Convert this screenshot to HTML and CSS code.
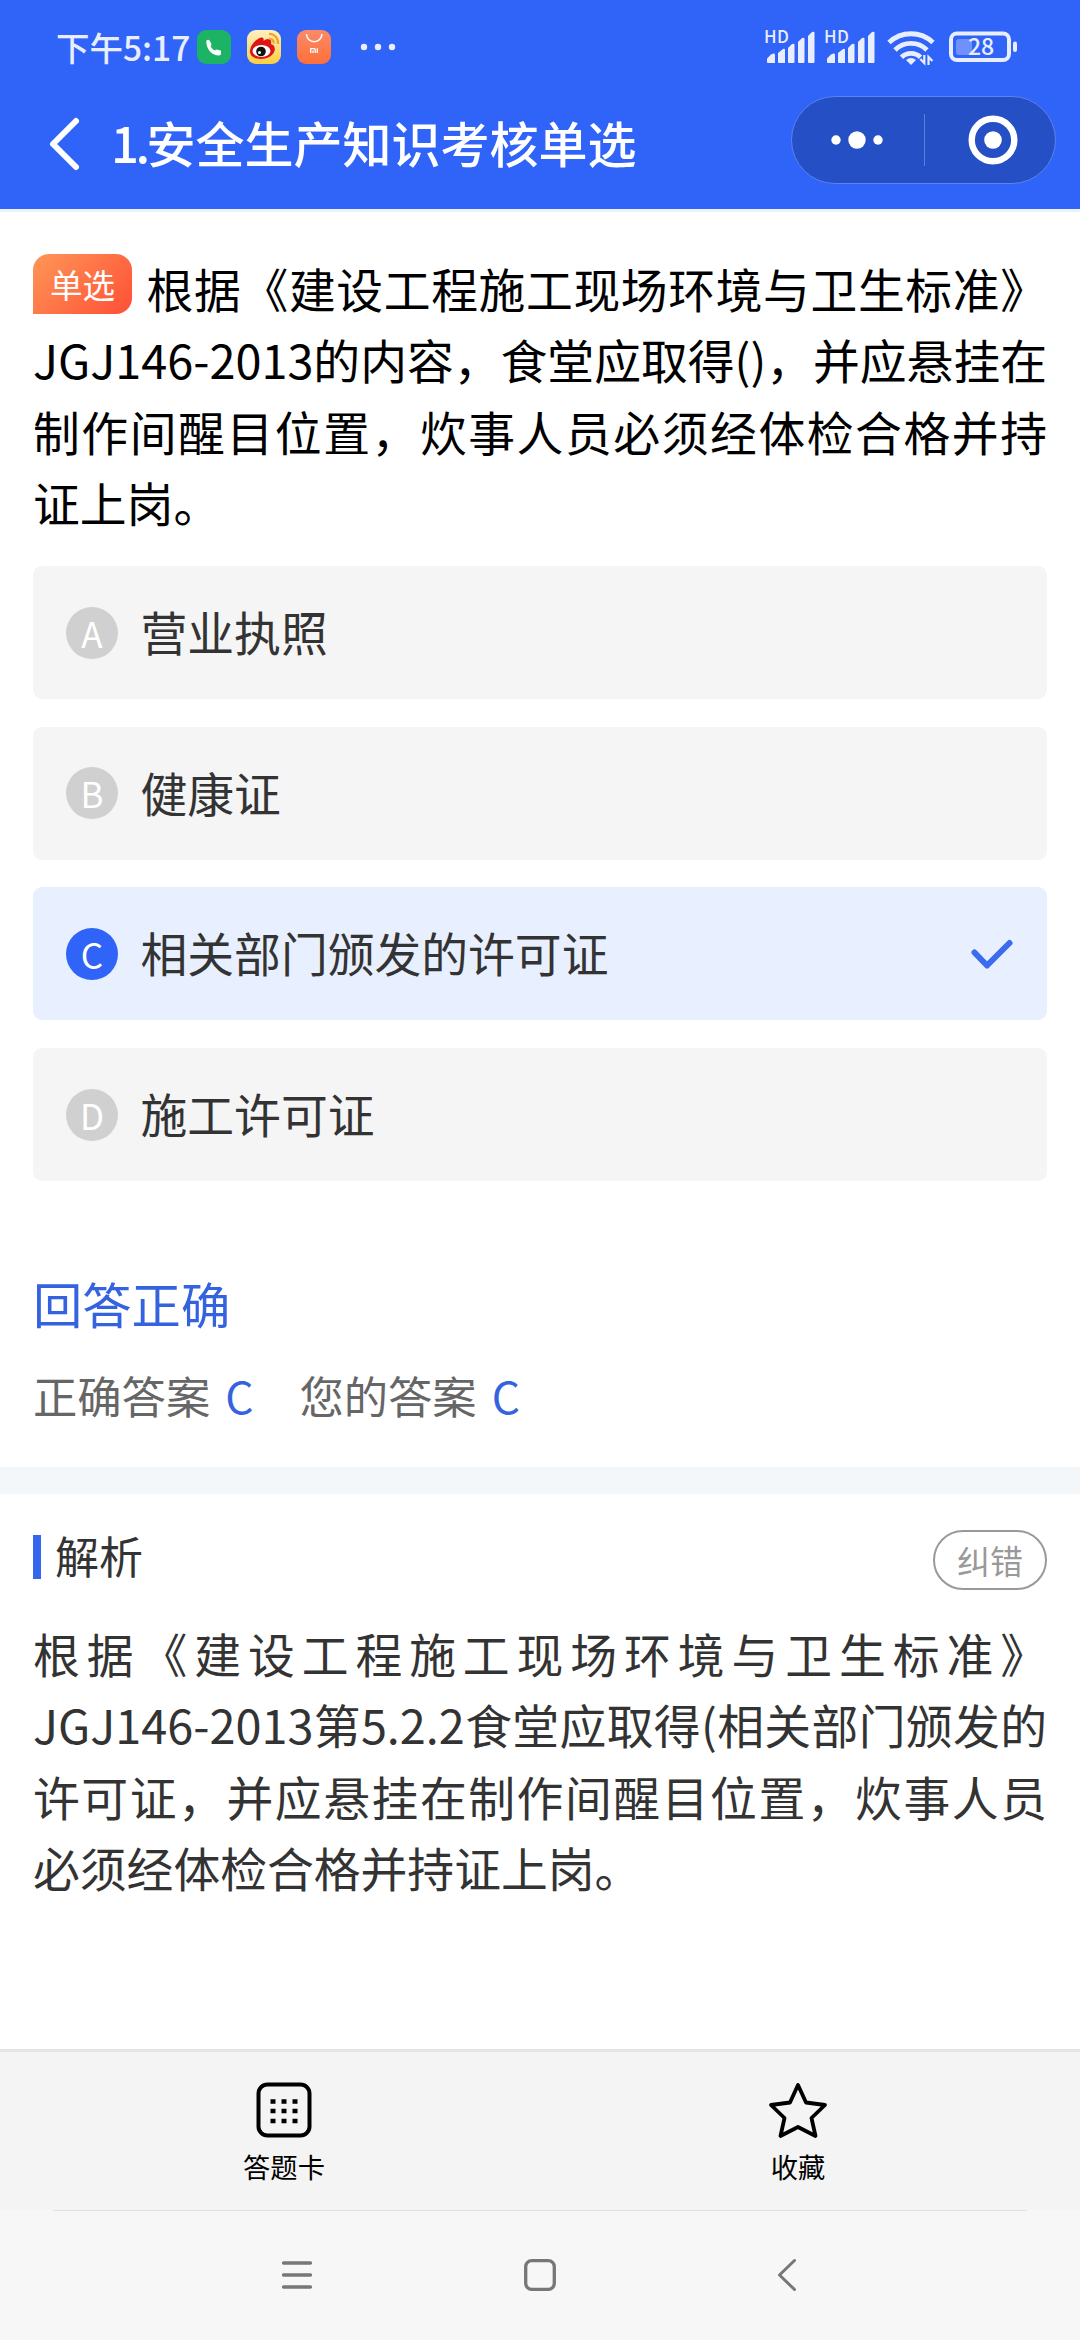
FILE: index.html
```html
<!DOCTYPE html>
<html lang="zh-CN">
<head>
<meta charset="utf-8">
<title>安全生产知识考核</title>
<link rel="stylesheet" href="styles.css">
</head>
<body>
<div class="screen">
  <header class="header">
    <div class="status">
      <div class="status-left">
        <span class="time">下午5:17</span>
        <svg class="app" viewBox="0 0 34 34"><rect width="34" height="34" rx="9" fill="#1cb464"/><path d="M9.500 10.500c.8-1 2.400-1 3.100 0l1.800 3.400c.3.900-.1 1.500-.9 2.200 1 2.200 2.400 3.500 4.500 4.400.8-.8 1.500-1.200 2.300-.8l3.700.8V24c-.3 1-1.500 1.500-2.800 1.500C14 25.500 8.300 17 9.500 10.500z" fill="#fff"/></svg>
        <svg class="app" viewBox="0 0 34 34"><defs><linearGradient id="wb" x2="0" y2="1"><stop stop-color="#fff0c4"/><stop offset="1" stop-color="#fbcf3f"/></linearGradient></defs><rect width="34" height="34" rx="9" fill="url(#wb)"/><path d="M3 20.500C3.500 15 9 8.500 14.500 7.500c2-.2 2.500 1.500 2 3.500 2-2 4.500-2.700 6.500-1.500 1.500 1 1.400 3 1 4.500 3 1 4.500 3.500 3.500 7-1.500 5-7.500 8-14 8S2.500 25.500 3 20.500z" fill="#dc1616"/><ellipse cx="14.500" cy="21" rx="9" ry="6" fill="#fff"/><circle cx="14" cy="21.500" r="4.800" fill="#111"/><circle cx="12.500" cy="22.500" r="1.500" fill="#fff"/><path d="M22 4c5-.5 9.500 4 9 10M22 8.500c3 0 5 2 4.800 5" fill="none" stroke="#e9a628" stroke-width="2.200"/></svg>
        <svg class="app" viewBox="0 0 34 34"><defs><linearGradient id="mi" x2="0" y2="1"><stop stop-color="#fb8a68"/><stop offset="1" stop-color="#fd7038"/></linearGradient></defs><rect width="34" height="34" rx="9" fill="url(#mi)"/><path d="M9.500 4a7.700 7.700 0 0 0 15.400 0" fill="none" stroke="#fff" stroke-width="1.600"/><path d="M13.700 23v-4.300h3.500q1 0 1 1V23M16 20.500V23M20.300 18.200V23" fill="none" stroke="#fff" stroke-width="1.300"/></svg>
        <svg class="more" viewBox="0 0 36 8"><g fill="#e8eeff"><circle cx="4" cy="4" r="3.200"/><circle cx="18" cy="4" r="3.200"/><circle cx="32" cy="4" r="3.200"/></g></svg>
      </div>
      <svg class="status-right" viewBox="0 0 254 36">
        <defs><g id="bars"><path d="M2 33v-3.500l4-4q4-2 4 .5v8H3q-1 0-1-1z"/><path d="M13 33v-9l5-4q2-.6 2 .8V34h-6q-1 0-1-1zM23 33V19l4-4q2.500-1 2.500.8V33q0 1-1 1H24q-1 0-1-1zM33 33V13l4-4q2.500-1 2.500.8V33q0 1-1 1H34q-1 0-1-1zM43 33V7l4-4q2.500-1 2.500.8V33q0 1-1 1H44q-1 0-1-1z"/></g></defs>
        <g fill="#e8eeff">
          <text class="hd" x="-1" y="14" textLength="25">HD</text><use href="#bars"/>
          <text class="hd" x="59" y="14" textLength="25">HD</text><use href="#bars" x="60"/>
        </g>
        <g fill="none" stroke="#e8eeff" stroke-width="4.800"><path d="M124 13.500a32 32 0 0 1 44 0"/><path d="M130 21a22.500 22.500 0 0 1 32 0"/><path d="M136.500 28.200a13.500 13.500 0 0 1 19 0"/></g>
        <path d="M141 31q5-4 10 0l-5 5z" fill="#e8eeff"/>
        <path d="M159.300 26v8l-4-4M163.500 36v-8l4 4" fill="none" stroke="#e8eeff" stroke-width="2.200"/>
        <rect x="186" y="4.500" width="58" height="26.500" rx="6" fill="none" stroke="#e8eeff" stroke-width="4"/>
        <path d="M194 10h13v16h-13q-3 0-3-3V13q0-3 3-3z" fill="#6f92fa"/>
        <rect x="248" y="12.500" width="4" height="10.500" rx="2" fill="#e8eeff"/>
        <text class="charge" x="216" y="26" text-anchor="middle">28</text>
      </svg>
    </div>
    <div class="nav">
      <svg class="back" viewBox="0 0 32 54"><path d="M28 4 5 27l23 23" fill="none" stroke="#fff" stroke-width="6" stroke-linecap="round" stroke-linejoin="round"/></svg>
      <h1 class="title"><span class="index">1.</span>安全生产知识考核单选</h1>
      <div class="capsule">
        <svg class="capsule-dots" viewBox="0 0 52 18"><g fill="#fff"><circle cx="5" cy="9" r="4.700"/><circle cx="26" cy="9" r="8.700"/><circle cx="47" cy="9" r="4.700"/></g></svg>
        <span class="capsule-line"></span>
        <svg class="capsule-ring" viewBox="0 0 50 50"><circle cx="25" cy="25" r="21.300" fill="none" stroke="#fff" stroke-width="6.400"/><circle cx="25" cy="25" r="8.800" fill="#fff"/></svg>
      </div>
    </div>
  </header>

  <main class="content">
    <p class="question"><span class="tag">单选</span>根据《建设工程施工现场环境与卫生标准》JGJ146-2013的内容，食堂应取得()，并应悬挂在制作间醒目位置，炊事人员必须经体检合格并持证上岗。</p>
    <div class="options">
      <div class="option"><span class="letter">A</span><span class="label">营业执照</span></div>
      <div class="option"><span class="letter">B</span><span class="label">健康证</span></div>
      <div class="option selected"><span class="letter">C</span><span class="label">相关部门颁发的许可证</span>
        <svg class="check" viewBox="0 0 42 32"><path d="M3.500 14.500 16 27.500 38.500 5" fill="none" stroke="#3b6cf0" stroke-width="6" stroke-linecap="round" stroke-linejoin="round"/></svg></div>
      <div class="option"><span class="letter">D</span><span class="label">施工许可证</span></div>
    </div>
    <div class="result">回答正确</div>
    <div class="answers">
      <span>正确答案</span><span class="value">C</span>
      <span>您的答案</span><span class="value">C</span>
    </div>
  </main>

  <section class="analysis">
    <div class="analysis-head">
      <span class="marker"></span><h2 class="analysis-title">解析</h2>
      <span class="report">纠错</span>
    </div>
    <p class="explain">根据《建设工程施工现场环境与卫生标准》JGJ146-2013第5.2.2食堂应取得(相关部门颁发的许可证，并应悬挂在制作间醒目位置，炊事人员必须经体检合格并持证上岗。</p>
  </section>

  <footer class="toolbar">
    <div class="tool">
      <svg class="tool-icon" viewBox="0 0 58 58"><rect x="3.500" y="3.500" width="51" height="51" rx="9" fill="none" stroke="#000" stroke-width="4"/><path d="M15.500 20.500h5m6 0h5m6 0h5M15.500 30h5m6 0h5m6 0h5M15.500 40h5m6 0h5m6 0h5" stroke="#000" stroke-width="4.600"/></svg>
      <span>答题卡</span>
    </div>
    <div class="tool">
      <svg class="tool-icon" viewBox="0 0 58 58"><path d="M29 4 37 21.500 56 24 42.500 37 46.500 55 29 46 11.500 55 15.500 37 2 24 21 21.500z" fill="none" stroke="#000" stroke-width="3.800" stroke-linejoin="round"/></svg>
      <span>收藏</span>
    </div>
  </footer>
  <nav class="system">
    <svg class="sys" viewBox="0 0 36 36"><path d="M4.500 6h27M4.500 18h27M4.500 30h27" stroke="#777" stroke-width="3.300" stroke-linecap="round"/></svg>
    <svg class="sys home" viewBox="0 0 36 36"><rect x="3.700" y="3.700" width="28.600" height="28.600" rx="6" fill="none" stroke="#777" stroke-width="3.300"/></svg>
    <svg class="sys" viewBox="0 0 36 36"><path d="M23.500 3.500 8.500 18l15 14.500" fill="none" stroke="#777" stroke-width="3" stroke-linecap="round" stroke-linejoin="round"/></svg>
  </nav>
</div>
</body>
</html>
```
FILE: styles.css
```css
* { box-sizing: border-box; margin: 0; padding: 0; }
body {
  width: 1080px;
  background: #fff;
  font-family: "Noto Sans CJK SC", sans-serif;
  color: #333;
}
svg { display: block; flex: none; overflow: visible; }
.screen { width: 1080px; height: 2340px; display: flex; flex-direction: column; }

.header { height: 212px; flex: none; background: #3063f7; border-bottom: 3px solid #edf3fd; }
.status { height: 94px; display: flex; justify-content: space-between; padding: 0 61px 0 56px; align-items: center; }
.status-left { display: flex; align-items: center; }
.time { width: 141px; font-size: 33.500px; font-weight: 500; line-height: 40px; color: #e8eeff; white-space: nowrap; }
.app { width: 34px; height: 34px; margin-right: 16px; }
.more { width: 36px; height: 8px; margin-left: 13px; }
.status-right { width: 254px; height: 36px; }
.hd { font-size: 17px; font-weight: 500; }
.charge { font-size: 23px; font-weight: 500; fill: #e8eeff; }

.nav { display: flex; align-items: center; height: 92px; padding: 0 24px 0 48px; }
.back { width: 32px; height: 54px; margin-top: 8px; }
.title { margin: 4px 0 0 31px; font-size: 49px; font-weight: 500; line-height: 60px; color: #fff; white-space: nowrap; }
.index { letter-spacing: -3.500px; }
.capsule { width: 265px; height: 88px; margin-left: auto; display: flex; align-items: center; border: 1px solid #5b82ee; border-radius: 44px; background: #254fc4; }
.capsule-dots { width: 52px; height: 18px; margin-left: 39px; }
.capsule-line { width: 1px; height: 52px; margin-left: 41px; background: #5b7fe0; }
.capsule-ring { width: 50px; height: 50px; margin-left: 43px; }

.content { flex: none; height: 1255px; padding: 40px 33px 0; }
.question, .explain { font-size: 46.800px; line-height: 71.300px; text-align: justify; }
.question { height: 314px; color: #000; }
.tag { display: inline-block; width: 99px; height: 60px; margin: -10px 14px 0 0; border-radius: 16px 16px 16px 0; background: linear-gradient(135deg, #ff9657, #ff4f36); color: #fff; font-size: 32.500px; line-height: 60px; text-align: center; vertical-align: 10.500px; text-align-last: center; }
.options { display: flex; flex-direction: column; gap: 27.700px; }
.option { height: 133px; display: flex; align-items: center; padding: 0 34px 0 33px; border-radius: 9px; background: #f5f5f5; font-size: 46.800px; }
.letter { width: 52px; height: 52px; border-radius: 50%; background: #d0d0d0; color: #fff; font-size: 35px; line-height: 51px; text-align: center; }
.label { margin: -4px 0 0 22.500px; }
.selected { background: #e8effe; }
.selected .letter { background: #3063f7; }
.check { width: 42px; height: 32px; margin-left: auto; }
.result { margin-top: 87px; font-size: 49.300px; line-height: 70px; color: #3563e0; }
.answers { display: flex; margin-top: 25px; font-size: 44.300px; line-height: 64px; color: #666; }
.value { margin: 0 46px 0 15px; color: #3563e0; }

.analysis { flex: 1; border-top: 27px solid #f3f7fa; padding: 36px 33px 0; }
.analysis-head { display: flex; align-items: center; height: 60px; }
.marker { width: 8px; height: 44px; margin-top: -6px; background: #3566ee; }
.analysis-title { margin: -10px 0 0 14px; font-size: 44px; font-weight: 400; line-height: 60px; }
.report { width: 114px; height: 60px; margin-left: auto; border: 2px solid #999; border-radius: 30px; font-size: 33px; line-height: 56px; text-align: center; color: #999; }
.explain { margin-top: 27px; }

.toolbar { flex: none; height: 161px; display: flex; padding: 29px 25px 0 27px; border-top: 3px solid #e5e5e5; background: #f4f4f4; color: #000; }
.tool { flex: 1; display: flex; flex-direction: column; align-items: center; font-size: 27.300px; line-height: 40px; }
.tool-icon { width: 58px; height: 58px; margin-bottom: 7px; }
.system { flex: none; height: 130px; display: flex; justify-content: space-between; padding: 47px 273px 0 279px; background: linear-gradient(#dfdfdf, #dfdfdf) 50% 0 / 974px 1px no-repeat #f7f7f7; }
.sys { width: 36px; height: 36px; }
.home { margin-right: 6px; }
```
